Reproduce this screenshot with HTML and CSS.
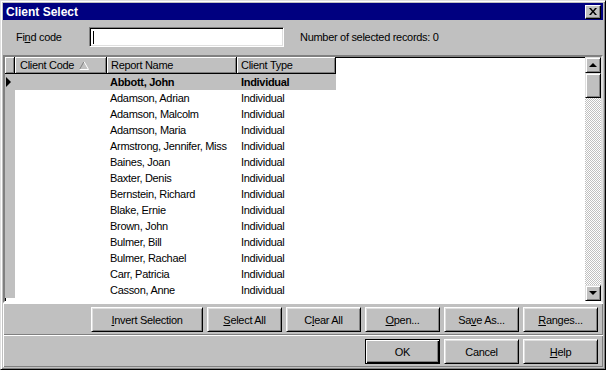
FILE: index.html
```html
<!DOCTYPE html>
<html lang="en">
<head>
    <meta charset="UTF-8">
    <title>Client Select</title>
    <link rel="stylesheet" href="styles.css">
</head>
<body>
    <div class="window">
        <div class="titlebar">
            <span class="title">Client Select</span>
            <div class="close-btn">
                <svg width="8" height="7" viewBox="0 0 8 7"><path d="M0 0h2l2 2.5L6 0h2L5 3.5 8 7H6L4 4.5 2 7H0l3-3.5z" fill="#000"/></svg>
            </div>
        </div>

        <div class="find-row">
            <span class="find-label">Fi<u>n</u>d code</span>
            <div class="textbox"><span class="caret"></span></div>
            <span class="count">Number of selected records: 0</span>
        </div>

        <div class="grid">
            <div class="grid-main">
                <div class="grid-head">
                    <div class="hcell ind"></div>
                    <div class="hcell code">Client Code
                        <svg class="sort" width="10" height="9" viewBox="0 0 10 9">
                            <path d="M0.5 8.5 5 0.5" stroke="#808080" fill="none"/>
                            <path d="M5 0.5 9.5 8.5H0.5" stroke="#fff" fill="none"/>
                        </svg>
                    </div>
                    <div class="hcell name">Report Name</div>
                    <div class="hcell type">Client Type</div>
                </div>
                <div class="grid-rows">
                    <div class="row selected"><div class="ind"><span class="arrow"></span></div><div class="cell"></div><div class="cell">Abbott, John</div><div class="cell">Individual</div></div>
                    <div class="row"><div class="ind"></div><div class="cell"></div><div class="cell">Adamson, Adrian</div><div class="cell">Individual</div></div>
                    <div class="row"><div class="ind"></div><div class="cell"></div><div class="cell">Adamson, Malcolm</div><div class="cell">Individual</div></div>
                    <div class="row"><div class="ind"></div><div class="cell"></div><div class="cell">Adamson, Maria</div><div class="cell">Individual</div></div>
                    <div class="row"><div class="ind"></div><div class="cell"></div><div class="cell">Armstrong, Jennifer, Miss</div><div class="cell">Individual</div></div>
                    <div class="row"><div class="ind"></div><div class="cell"></div><div class="cell">Baines, Joan</div><div class="cell">Individual</div></div>
                    <div class="row"><div class="ind"></div><div class="cell"></div><div class="cell">Baxter, Denis</div><div class="cell">Individual</div></div>
                    <div class="row"><div class="ind"></div><div class="cell"></div><div class="cell">Bernstein, Richard</div><div class="cell">Individual</div></div>
                    <div class="row"><div class="ind"></div><div class="cell"></div><div class="cell">Blake, Ernie</div><div class="cell">Individual</div></div>
                    <div class="row"><div class="ind"></div><div class="cell"></div><div class="cell">Brown, John</div><div class="cell">Individual</div></div>
                    <div class="row"><div class="ind"></div><div class="cell"></div><div class="cell">Bulmer, Bill</div><div class="cell">Individual</div></div>
                    <div class="row"><div class="ind"></div><div class="cell"></div><div class="cell">Bulmer, Rachael</div><div class="cell">Individual</div></div>
                    <div class="row"><div class="ind"></div><div class="cell"></div><div class="cell">Carr, Patricia</div><div class="cell">Individual</div></div>
                    <div class="row"><div class="ind"></div><div class="cell"></div><div class="cell">Casson, Anne</div><div class="cell">Individual</div></div>
                </div>
            </div>
            <div class="scrollbar">
                <div class="sb-btn"><span class="tri-up"></span></div>
                <div class="sb-thumb"></div>
                <div class="sb-track"></div>
                <div class="sb-btn"><span class="tri-down"></span></div>
            </div>
        </div>

        <div class="panel">
            <div class="btn wide"><u>I</u>nvert Selection</div>
            <div class="btn"><u>S</u>elect All</div>
            <div class="btn">C<u>l</u>ear All</div>
            <div class="btn"><u>O</u>pen...</div>
            <div class="btn">Sa<u>v</u>e As...</div>
            <div class="btn"><u>R</u>anges...</div>
        </div>
        <div class="panel">
            <div class="btn default">OK</div>
            <div class="btn">Cancel</div>
            <div class="btn"><u>H</u>elp</div>
        </div>
    </div>
</body>
</html>
```

FILE: styles.css
```css
* {
    box-sizing: border-box;
}
body {
    margin: 0;
    background: #c0c0c0;
    font-family: "Liberation Sans", Arial, sans-serif;
    font-size: 11px;
    letter-spacing: -0.3px;
    color: #000;
}
u {
    text-decoration-thickness: 1px;
    text-underline-offset: 1px;
}
.window {
    width: 606px;
    height: 370px;
    display: flex;
    flex-direction: column;
    padding: 2px;
    border: 1px solid;
    border-color: #dfdfdf #000 #000 #dfdfdf;
    box-shadow: inset 1px 1px #fff, inset -1px -1px #808080;
    background: #c0c0c0;
}
.titlebar {
    height: 17px;
    background: #000080;
    display: flex;
    align-items: center;
    justify-content: space-between;
    padding: 0 2px 0 3px;
}
.title {
    color: #fff;
    font-weight: bold;
    font-size: 12px;
    letter-spacing: 0;
}
.close-btn {
    width: 16px;
    height: 14px;
    display: flex;
    align-items: center;
    justify-content: center;
    background: #c0c0c0;
    border: 1px solid;
    border-color: #fff #000 #000 #fff;
    box-shadow: inset -1px -1px #808080;
}
.find-row {
    height: 35px;
    display: flex;
    align-items: center;
    padding: 0 0 2px 13px;
}
.find-label {
    width: 73px;
}
.textbox {
    width: 195px;
    height: 20px;
    background: #fff;
    border: 1px solid;
    border-color: #808080 #fff #fff #808080;
    box-shadow: inset 1px 1px #000, inset -1px -1px #dfdfdf;
    padding: 3px 0 0 3px;
}
.caret {
    display: block;
    width: 1px;
    height: 13px;
    background: #000;
}
.count {
    margin-left: 16px;
}

/* grid */
.grid {
    height: 248px;
    display: flex;
    border: 2px solid;
    border-color: #808080 #dfdfdf #fff #808080;
    box-shadow: inset 1px 1px #000;
    background: #fff;
}
.grid-main {
    flex: 1;
    display: flex;
    flex-direction: column;
}
.grid-head {
    display: flex;
    height: 17px;
}
.hcell {
    height: 17px;
    background: #c0c0c0;
    border-right: 1px solid #000;
    border-bottom: 1px solid #000;
    box-shadow: inset 1px 1px #fff, inset -1px -1px #808080;
    padding: 2px 0 0 4px;
    white-space: nowrap;
    display: flex;
    align-items: flex-start;
}
.hcell.ind {
    width: 10px;
}
.hcell.code {
    width: 92px;
    padding-left: 5px;
}
.hcell.name {
    width: 130px;
}
.hcell.type {
    width: 99px;
}
.sort {
    margin: 2px 0 0 5px;
}
.row {
    display: grid;
    grid-template-columns: 10px 92px 130px 99px;
    height: 16px;
    line-height: 16px;
}
.row .ind {
    background: #c0c0c0;
    display: flex;
    align-items: center;
    padding-left: 1px;
}
.row .cell {
    padding-left: 3px;
    white-space: nowrap;
}
.row .cell:last-child {
    padding-left: 4px;
}
.row.selected .cell {
    background: #c0c0c0;
    font-weight: bold;
}
.arrow {
    width: 0;
    height: 0;
    border-left: 5px solid #000;
    border-top: 5px solid transparent;
    border-bottom: 5px solid transparent;
}
.scrollbar {
    width: 16px;
    display: flex;
    flex-direction: column;
}
.sb-btn, .sb-thumb {
    background: #c0c0c0;
    border: 1px solid;
    border-color: #dfdfdf #000 #000 #dfdfdf;
    box-shadow: inset 1px 1px #fff, inset -1px -1px #808080;
}
.sb-btn {
    height: 16px;
    display: flex;
    align-items: center;
    justify-content: center;
}
.sb-thumb {
    height: 25px;
}
.sb-track {
    flex: 1;
    background: repeating-conic-gradient(#c0c0c0 0 25%, #fff 0 50%) 0 0 / 2px 2px;
}
.tri-up, .tri-down {
    width: 0;
    height: 0;
    border-left: 4px solid transparent;
    border-right: 4px solid transparent;
}
.tri-up {
    border-bottom: 4px solid #000;
}
.tri-down {
    border-top: 4px solid #000;
}

/* button panels */
.panel {
    height: 32px;
    display: flex;
    justify-content: flex-end;
    align-items: flex-start;
    gap: 4px;
    padding: 4px 5px 0 0;
    box-shadow: inset 1px 1px #fff, inset -1px -1px #808080;
}
.btn {
    width: 75px;
    height: 25px;
    display: flex;
    align-items: center;
    justify-content: center;
    background: #c0c0c0;
    border: 1px solid;
    border-color: #fff #000 #000 #fff;
    box-shadow: inset 1px 1px #dfdfdf, inset -1px -1px #808080;
    white-space: nowrap;
}
.btn.wide {
    width: 112px;
}
.btn.default {
    border: 1px solid #000;
    box-shadow: inset 1px 1px #fff, inset -1px -1px #000, inset -2px -2px #808080;
}
```
